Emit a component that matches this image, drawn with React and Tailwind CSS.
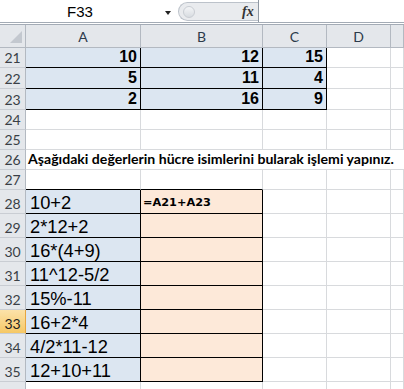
const ROW_TEMPLATE = 'grid grid-cols-[26px_115px_122px_64px_64px_1fr]';

const ROWS = [
  { n: 21, h: 'h-[20px]', nums: ['10', '12', '15'] },
  { n: 22, h: 'h-[21px]', nums: ['5', '11', '4'] },
  { n: 23, h: 'h-[21px]', nums: ['2', '16', '9'] },
  { n: 24, h: 'h-[20px]' },
  { n: 25, h: 'h-[20px]' },
  { n: 26, h: 'h-[20px]', note: 'Aşağıdaki değerlerin hücre isimlerini bularak işlemi yapınız.' },
  { n: 27, h: 'h-[20px]' },
  { n: 28, h: 'h-[24px]', expr: '10+2', answer: '=A21+A23' },
  { n: 29, h: 'h-[24px]', expr: '2*12+2' },
  { n: 30, h: 'h-[24px]', expr: '16*(4+9)' },
  { n: 31, h: 'h-[24px]', expr: '11^12-5/2' },
  { n: 32, h: 'h-[24px]', expr: '15%-11' },
  { n: 33, h: 'h-[24px]', expr: '16+2*4', active: true },
  { n: 34, h: 'h-[24px]', expr: '4/2*11-12' },
  { n: 35, h: 'h-[24px]', expr: '12+10+11' },
  { n: 36, h: 'h-[24px]' },
];

// boxed ranges: A21:C23 and A28:B35
function inBox(r, c) {
  return (r >= 21 && r <= 23 && c <= 2) || (r >= 28 && r <= 35 && c <= 1);
}

function fill(r, c) {
  if (r >= 21 && r <= 23 && c <= 2) return 'bg-[#dce6f1]';
  if (r >= 28 && r <= 35 && c === 0) return 'bg-[#dce6f1]';
  if (r >= 28 && r <= 35 && c === 1) return 'bg-[#fde9d9]';
  return 'bg-white';
}

function FormulaBar() {
  return (
    <div className="flex h-[23px] border-b border-[#a3abb5] bg-white">
      <div className="relative w-[178px]">
        <span className="absolute left-0 top-[3px] w-[160px] text-center font-['Liberation_Sans',sans-serif] text-[15px] leading-[17px] text-black">
          F33
        </span>
        <span className="absolute left-[165px] top-[11px] h-0 w-0 border-x-[3px] border-t-[4px] border-x-transparent border-t-[#222]" />
      </div>
      <div className="relative mt-[2px] flex h-[19px] w-[80px] items-center rounded-l-full border border-r-0 border-[#bcc2ca] bg-[#e9ebee]">
        <span className="ml-[4px] h-[12px] w-[12px] rounded-full border border-[#c9cdd3] bg-gradient-to-b from-[#f4f5f7] to-[#d8dce1]" />
        <span className="absolute left-[63px] top-[1px] font-['Liberation_Serif',serif] text-[14px] font-bold italic leading-[16px] text-[#333]">
          fx
        </span>
      </div>
      <div className="flex-1 border-l border-[#8f98a3]" />
    </div>
  );
}

function ColumnHeaders() {
  return (
    <div className={`${ROW_TEMPLATE} h-[23px] bg-[#e4e7eb]`}>
      <div className="relative border-b border-r border-[#b3b9c1]">
        <svg className="absolute bottom-[4px] right-[3px]" width="12" height="12" viewBox="0 0 12 12">
          <polygon points="12,0 12,12 0,12" fill="#c3c8cf" />
        </svg>
      </div>
      {['A', 'B', 'C', 'D', ''].map((l, i) => (
        <div
          key={i}
          className="flex items-center justify-center border-b border-r border-[#b3b9c1] pt-[1px] font-['Lato',sans-serif] text-[14px] text-[#2c3a4a]"
        >
          {l}
        </div>
      ))}
    </div>
  );
}

function Row({ row }) {
  const r = row.n;
  const rowHead = row.active
    ? 'bg-gradient-to-b from-[#fbe2a9] to-[#f6c864] border-r-[#e7a640] text-[#222]'
    : 'bg-[#e4e7eb] border-r-[#b3b9c1] text-[#3a3f46]';

  const header = (
    <div className={`flex items-end justify-center border-b border-r border-b-[#c9cdd3] pb-[1px] font-['Lato',sans-serif] text-[14px] leading-[16px] ${rowHead}`}>
      {r}
    </div>
  );

  if (row.note) {
    return (
      <div className={`${ROW_TEMPLATE} ${row.h}`}>
        {header}
        <div className="col-span-5 flex items-end border-b border-[#d8dadd] bg-white pb-[2px] pl-[2px]">
          <span className="whitespace-nowrap font-['Lato',sans-serif] text-[14.1px] font-bold leading-[16px] text-black">
            {row.note}
          </span>
        </div>
      </div>
    );
  }

  return (
    <div className={`${ROW_TEMPLATE} ${row.h}`}>
      {header}
      {[0, 1, 2, 3, 4].map((c) => {
        const right = inBox(r, c) || inBox(r, c + 1) ? 'border-r-black' : 'border-r-[#d8dadd]';
        const bottom = inBox(r, c) || inBox(r + 1, c) ? 'border-b-black' : 'border-b-[#d8dadd]';
        return (
          <div key={c} className={`flex items-end border-b border-r ${right} ${bottom} ${fill(r, c)}`}>
            {row.nums && c <= 2 && (
              <span className="w-full pb-[2px] pr-[3px] text-right font-['Liberation_Sans',sans-serif] text-[16px] font-bold leading-[16px] text-black">
                {row.nums[c]}
              </span>
            )}
            {row.expr && c === 0 && (
              <span className="pl-[4px] font-['Liberation_Sans',sans-serif] text-[18.3px] leading-[20px] text-black">
                {row.expr}
              </span>
            )}
            {row.answer && c === 1 && (
              <span className="pb-[4px] pl-[2px] font-['DejaVu_Sans',sans-serif] text-[11.3px] font-bold leading-[13px] text-black">
                {row.answer}
              </span>
            )}
          </div>
        );
      })}
    </div>
  );
}

export default function App() {
  return (
    <div className="h-[389px] w-[404px] overflow-hidden bg-white">
      <FormulaBar />
      <div className="h-[2px] border-b border-[#a3abb5] bg-white" />
      <ColumnHeaders />
      {ROWS.map((row) => (
        <Row key={row.n} row={row} />
      ))}
    </div>
  );
}
